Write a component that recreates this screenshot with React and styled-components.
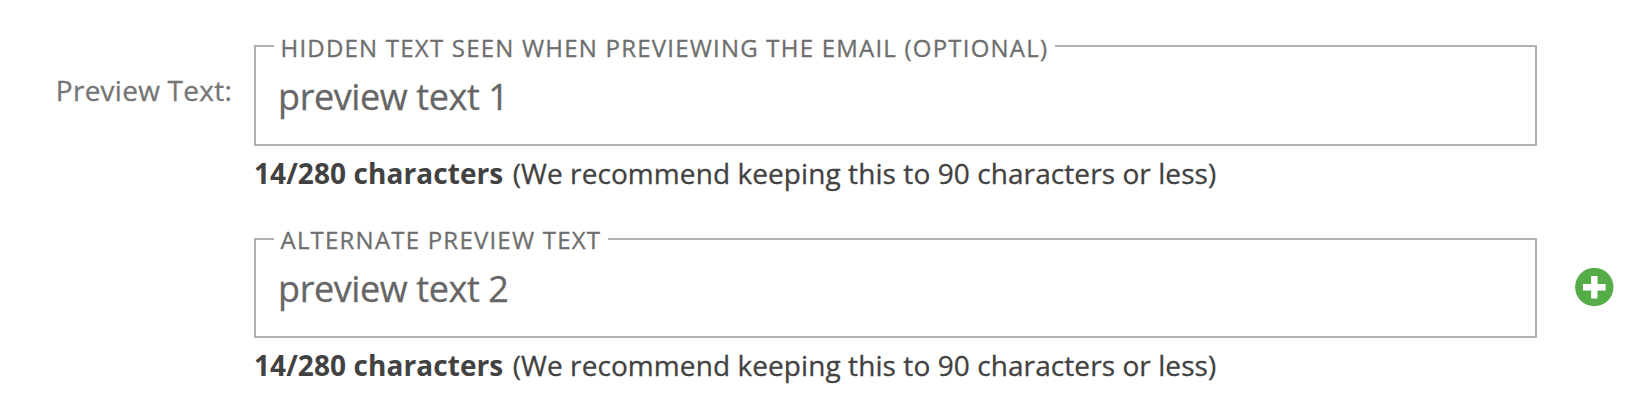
import React from 'react';
import styled, { createGlobalStyle } from 'styled-components';

const Global = createGlobalStyle`
  * { box-sizing: border-box; }
  body { margin: 0; background: #fff; font-family: "Open Sans", sans-serif; }
`;
const Form = styled.form`
  width: 1652px; height: 408px; padding-top: 45px;
  display: flex; flex-direction: column; gap: 49px;
  -webkit-text-stroke: 0.3px currentColor;
`;
const Row = styled.div`
  display: grid; grid-template-columns: 254px 1283px 1fr; height: 144px;
`;
const Label = styled.label`
  padding: 26px 22px 0 0; text-align: right; font-size: 28px; line-height: 38px;
  color: #757575; white-space: nowrap; letter-spacing: 0.25px;
`;
const Frame = styled.div`
  height: ${p => p.$compact ? 100 : 101}px; border: 2px solid #b1b1b1; padding: 0 22px;
`;
const Legend = styled.div`
  width: max-content; margin: ${p => p.$compact ? -17 : -16}px 0 0 -4px; padding: 0 7px 0 6.5px; background: #fff;
  font-size: 24px; line-height: 34px; letter-spacing: 1.21px; color: #6e6e6e; white-space: nowrap;
`;
const Input = styled.input`
  display: block; width: 100%; height: 50px; margin-top: 6px; padding: 0; border: 0; outline: 0;
  background: transparent; font: 36px "Open Sans", sans-serif; letter-spacing: -0.4px; color: #666;
`;
const Hint = styled.p`
  margin: 8px 0 0; font-size: 28px; line-height: 38px; letter-spacing: 0.08px; color: #424242; white-space: nowrap;
`;
const Count = styled.strong`font-weight: 700; margin-right: 2px; -webkit-text-stroke-width: 0;`;
const AddButton = styled.button`
  width: 39px; height: 39px; margin: 30px 0 0 38px; padding: 0; border: 0; background: none;
  svg { display: block; }
`;

function Field({ legend, value, compact }) {
  return (
    <div>
      <Frame $compact={compact}>
        <Legend $compact={compact}>{legend}</Legend>
        <Input defaultValue={value} aria-label={legend} />
      </Frame>
      <Hint><Count>14/280 characters</Count> (We recommend keeping this to 90 characters or less)</Hint>
    </div>
  );
}

export default function App() {
  return (
    <Form>
      <Global />
      <Row>
        <Label>Preview Text:</Label>
        <Field legend="HIDDEN TEXT SEEN WHEN PREVIEWING THE EMAIL (OPTIONAL)" value="preview text 1" />
      </Row>
      <Row>
        <span />
        <Field legend="ALTERNATE PREVIEW TEXT" value="preview text 2" compact />
        <AddButton type="button" aria-label="Add preview text">
          <svg width="39" height="39" viewBox="0 0 39 39">
            <circle cx="19.3" cy="19.1" r="19.2" fill="#55ad47" />
            <path d="M19.3 7.9v22.6M8 19.2h22.6" stroke="#fff" strokeWidth="6.4" />
          </svg>
        </AddButton>
      </Row>
    </Form>
  );
}
